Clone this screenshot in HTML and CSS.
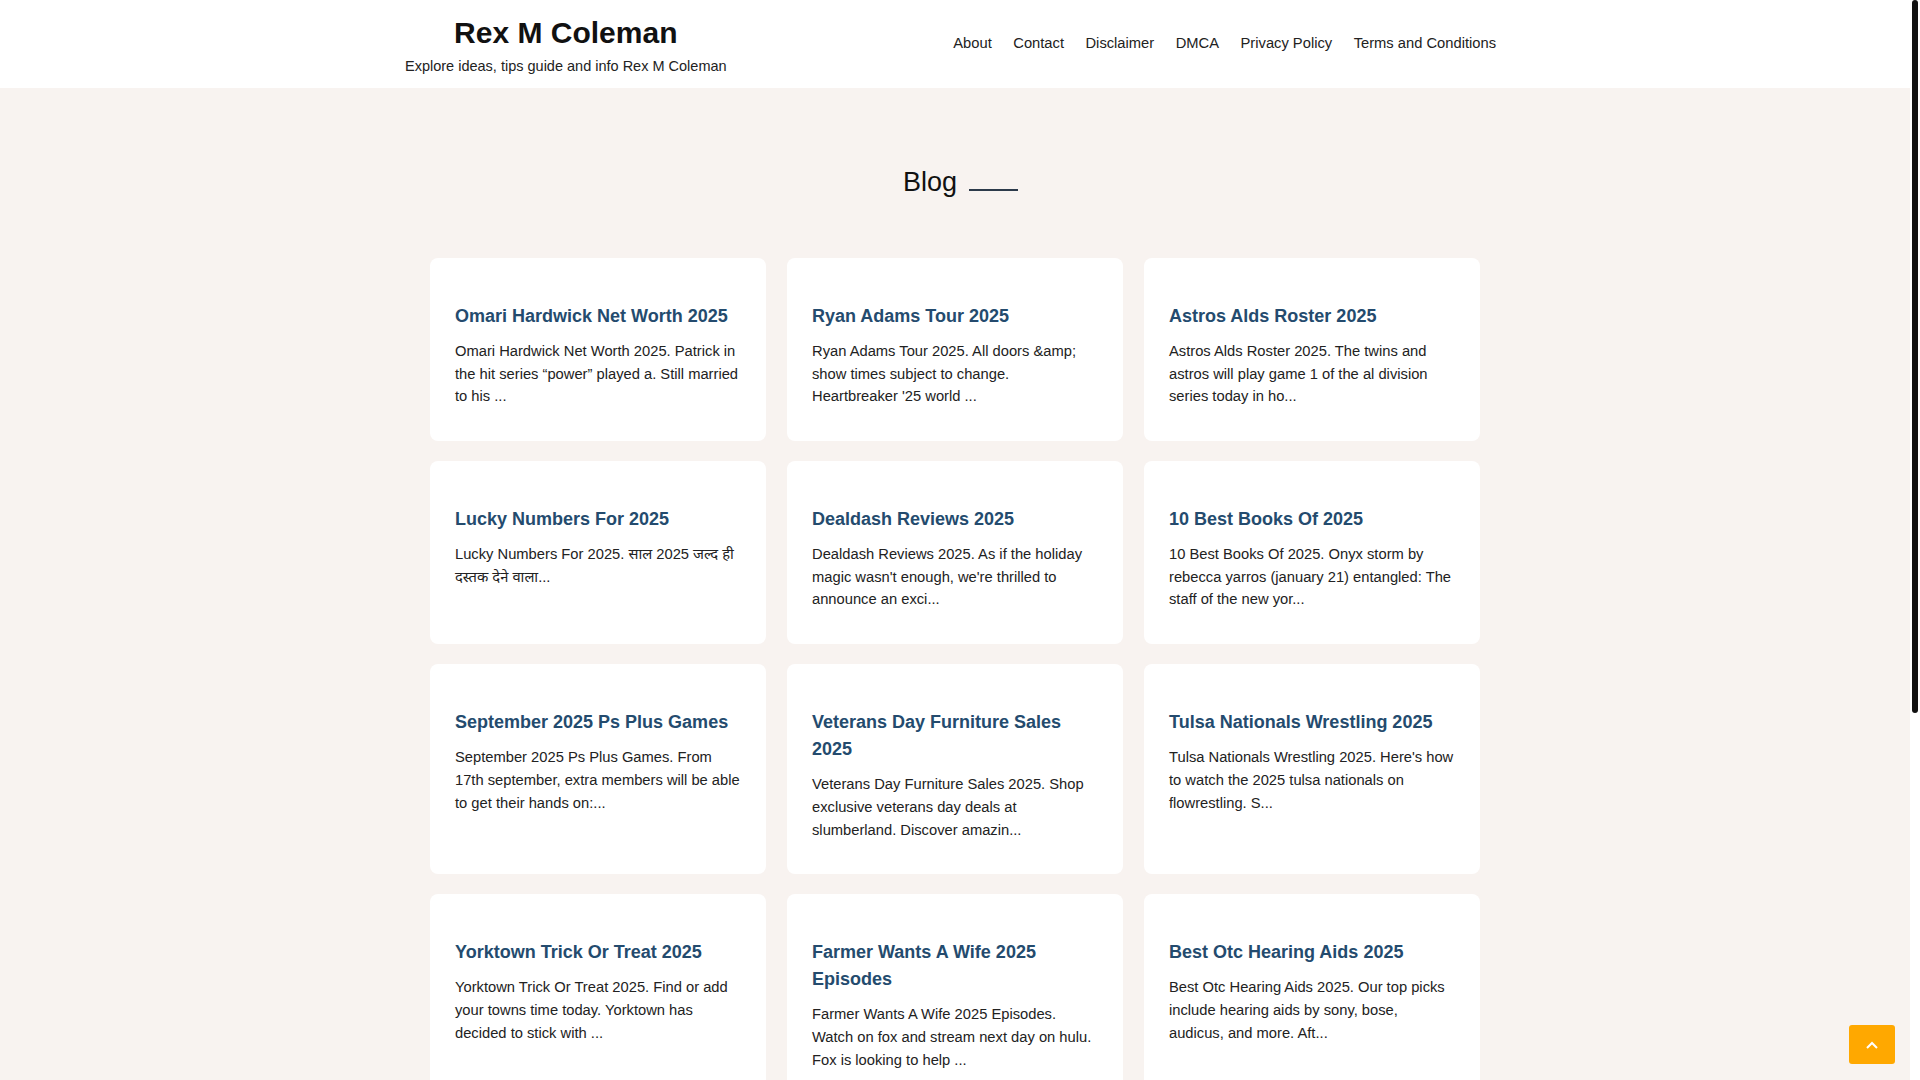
FILE: index.html
```html
<!DOCTYPE html>
<html lang="en">
<head>
<meta charset="utf-8">
<title>Rex M Coleman</title>
<link rel="stylesheet" href="styles.css">
</head>
<body>
<header class="site-header">
  <div class="header-inner">
    <div class="branding">
      <div class="site-title">Rex M Coleman</div>
      <div class="site-tagline">Explore ideas, tips guide and info Rex M Coleman</div>
    </div>
    <nav class="main-nav">
      <a href="#">About</a>
      <a href="#">Contact</a>
      <a href="#">Disclaimer</a>
      <a href="#">DMCA</a>
      <a href="#">Privacy Policy</a>
      <a href="#">Terms and Conditions</a>
    </nav>
  </div>
</header>
<main class="main">
  <h1 class="page-heading"><span class="heading-text">Blog</span></h1>
  <div class="post-grid">
    <article class="card">
      <h2 class="card-title">Omari Hardwick Net Worth 2025</h2>
      <p class="card-excerpt">Omari Hardwick Net Worth 2025. Patrick in the hit series “power” played a. Still married to his ...</p>
    </article>
    <article class="card">
      <h2 class="card-title">Ryan Adams Tour 2025</h2>
      <p class="card-excerpt">Ryan Adams Tour 2025. All doors &amp;amp; show times subject to change. Heartbreaker '25 world ...</p>
    </article>
    <article class="card">
      <h2 class="card-title">Astros Alds Roster 2025</h2>
      <p class="card-excerpt">Astros Alds Roster 2025. The twins and astros will play game 1 of the al division series today in ho...</p>
    </article>
    <article class="card">
      <h2 class="card-title">Lucky Numbers For 2025</h2>
      <p class="card-excerpt">Lucky Numbers For 2025. साल 2025 जल्द ही दस्तक देने वाला...</p>
    </article>
    <article class="card">
      <h2 class="card-title">Dealdash Reviews 2025</h2>
      <p class="card-excerpt">Dealdash Reviews 2025. As if the holiday magic wasn't enough, we're thrilled to announce an exci...</p>
    </article>
    <article class="card">
      <h2 class="card-title">10 Best Books Of 2025</h2>
      <p class="card-excerpt">10 Best Books Of 2025. Onyx storm by rebecca yarros (january 21) entangled: The staff of the new yor...</p>
    </article>
    <article class="card">
      <h2 class="card-title">September 2025 Ps Plus Games</h2>
      <p class="card-excerpt">September 2025 Ps Plus Games. From 17th september, extra members will be able to get their hands on:...</p>
    </article>
    <article class="card">
      <h2 class="card-title">Veterans Day Furniture Sales 2025</h2>
      <p class="card-excerpt">Veterans Day Furniture Sales 2025. Shop exclusive veterans day deals at slumberland. Discover amazin...</p>
    </article>
    <article class="card">
      <h2 class="card-title">Tulsa Nationals Wrestling 2025</h2>
      <p class="card-excerpt">Tulsa Nationals Wrestling 2025. Here's how to watch the 2025 tulsa nationals on flowrestling. S...</p>
    </article>
    <article class="card">
      <h2 class="card-title">Yorktown Trick Or Treat 2025</h2>
      <p class="card-excerpt">Yorktown Trick Or Treat 2025. Find or add your towns time today. Yorktown has decided to stick with ...</p>
    </article>
    <article class="card">
      <h2 class="card-title">Farmer Wants A Wife 2025 Episodes</h2>
      <p class="card-excerpt">Farmer Wants A Wife 2025 Episodes. Watch on fox and stream next day on hulu. Fox is looking to help ...</p>
    </article>
    <article class="card">
      <h2 class="card-title">Best Otc Hearing Aids 2025</h2>
      <p class="card-excerpt">Best Otc Hearing Aids 2025. Our top picks include hearing aids by sony, bose, audicus, and more. Aft...</p>
    </article>
  </div>
</main>
<footer class="site-footer">
  <div class="footer-inner">Copyright © 2025 Rex M Coleman</div>
</footer>
<a class="to-top" href="#" aria-label="Back to top">
  <svg width="14" height="8" viewBox="0 0 14 8"><polyline points="2,7 7,2 12,7" fill="none" stroke="#fff" stroke-width="2"/></svg>
</a>
<div class="scrollbar" aria-hidden="true"><div class="scrollbar-thumb"></div></div>
</body>
</html>
```
FILE: styles.css
```css
html {
  background: #fff;
}
body {
  margin: 0 10px 0 0;
  min-height: 100vh;
  background: #f8f3f0;
  font-family: "Liberation Sans", Arial, "Noto Sans Devanagari", "Noto Sans", sans-serif;
  color: #222;
}
.site-header {
  background: #fff;
}
.header-inner {
  width: 1100px;
  margin: 0 auto;
  height: 88px;
  padding-right: 9px;
  box-sizing: border-box;
  display: flex;
  justify-content: space-between;
  align-items: flex-start;
}
.branding {
  padding-top: 15px;
  text-align: center;
}
.site-title {
  font-size: 30px;
  line-height: 36px;
  font-weight: 700;
  color: #111;
}
.site-tagline {
  margin-top: 5px;
  font-size: 14.5px;
  line-height: 21px;
  color: #222;
}
.main-nav {
  padding-top: 32px;
  display: flex;
  gap: 21.5px;
}
.main-nav a {
  font-size: 14.72px;
  line-height: 22px;
  color: #222;
  text-decoration: none;
}
.main {
  width: 1050px;
  margin: 0 auto;
  padding-top: 77.5px;
  padding-bottom: 120px;
}
.page-heading {
  margin: 0 0 60px;
  padding-left: 11px;
  text-align: center;
  font-size: 27px;
  line-height: 32.4px;
  font-weight: 400;
  color: #111;
}
.heading-text::after {
  content: "";
  display: inline-block;
  width: 49px;
  height: 2px;
  margin-left: 12px;
  background: #2c3a4a;
  vertical-align: baseline;
}
.post-grid {
  display: grid;
  grid-template-columns: repeat(3, 336px);
  column-gap: 21px;
  row-gap: 20px;
}
.card {
  background: #fff;
  border-radius: 8px;
  padding: 45px 25px 33px;
}
.card-title {
  margin: 0;
  font-size: 18px;
  line-height: 27px;
  font-weight: 700;
  color: #244b6e;
}
.card-excerpt {
  margin: 10px 0 0;
  font-size: 14.72px;
  line-height: 22.7px;
  color: #222;
}
.site-footer {
  background: #fff;
}
.footer-inner {
  width: 1050px;
  margin: 0 auto;
  padding: 120px 0;
  text-align: center;
  font-size: 14px;
  color: #444;
}
.to-top {
  position: fixed;
  right: 25px;
  bottom: 16px;
  width: 46px;
  height: 39px;
  border-radius: 3px;
  background: #ffa800;
  display: flex;
  align-items: center;
  justify-content: center;
}
.scrollbar {
  position: fixed;
  top: 0;
  right: 0;
  width: 10px;
  height: 100vh;
  background: #fff;
}
.scrollbar-thumb {
  margin-left: 2px;
  width: 6px;
  height: 713px;
  border-radius: 3px;
  background: #111;
}
```
